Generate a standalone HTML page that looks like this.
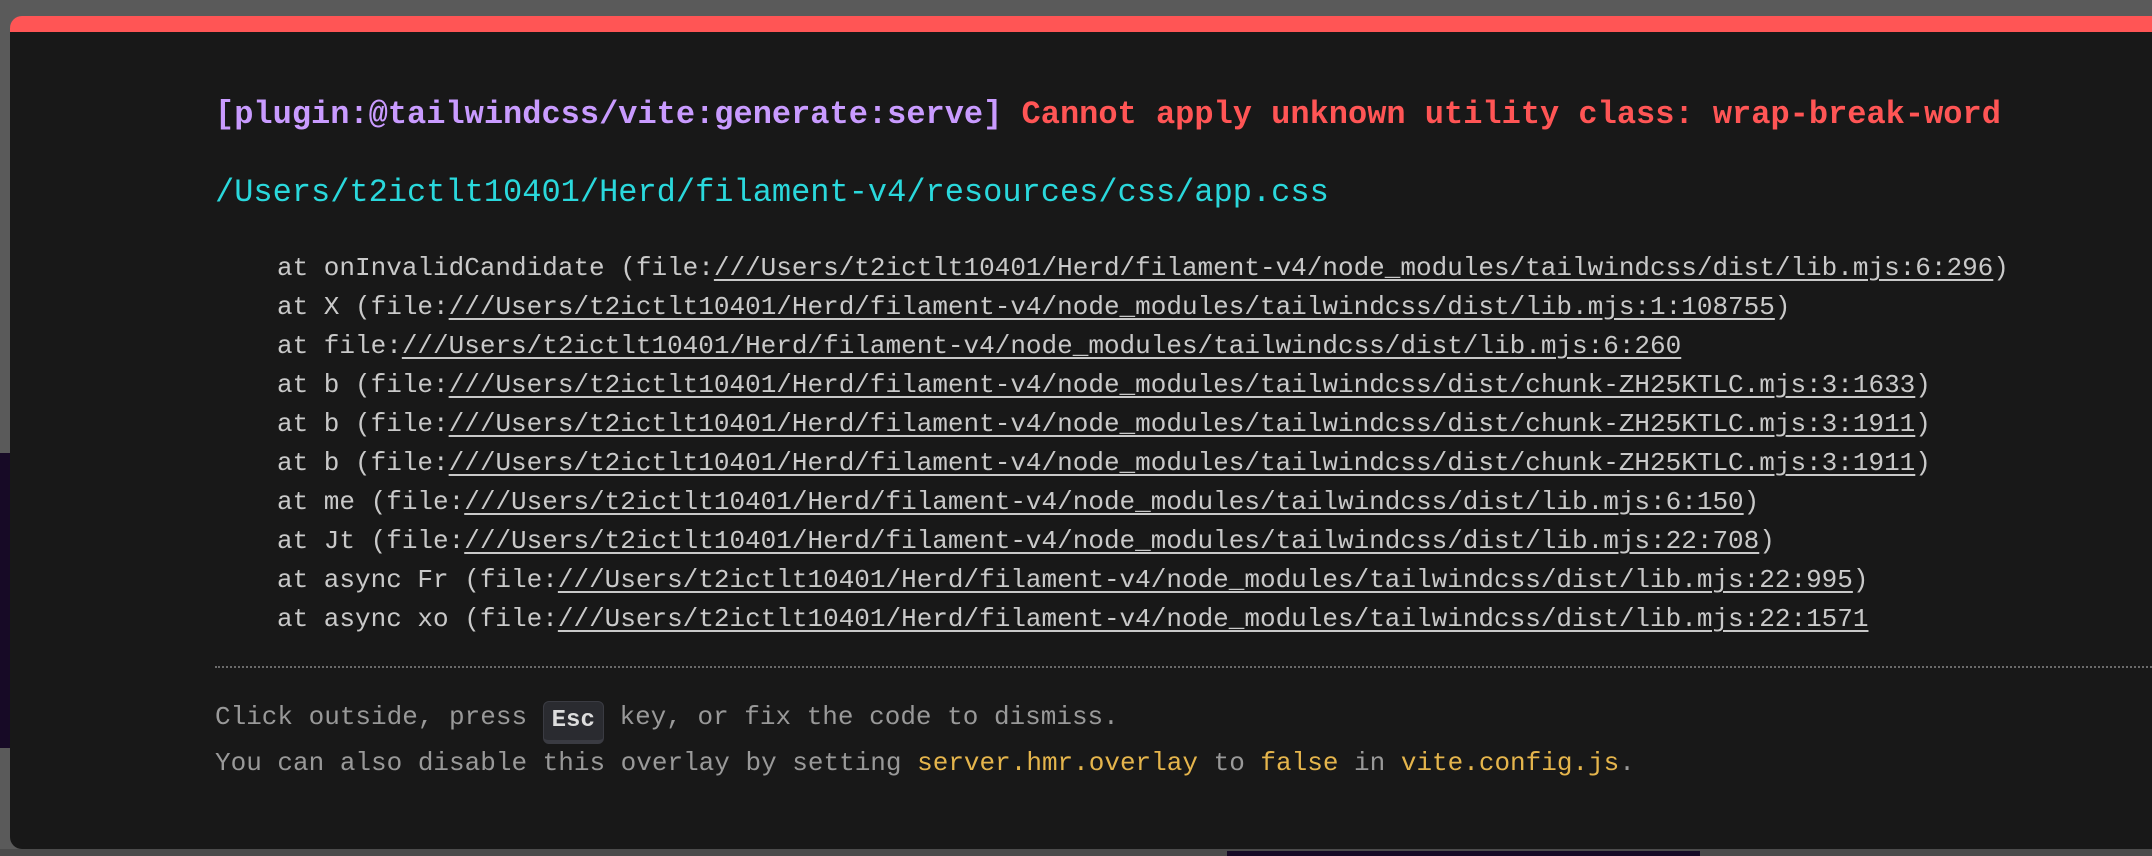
<!DOCTYPE html>
<html><head><meta charset="utf-8"><style>
html,body{margin:0;padding:0;width:2152px;height:856px;overflow:hidden;background:#5a5a5a;font-family:"Liberation Mono","DejaVu Sans Mono",monospace;}
.purple{position:absolute;left:0;top:453px;width:12px;height:295px;background:#170a26;}
.bot{position:absolute;left:0;top:849px;width:2152px;height:7px;background:#4b4b4b;}
.bot2{position:absolute;left:1227px;top:851px;width:473px;height:5px;background:#170a26;}
.panel{position:absolute;left:10px;top:16px;width:2200px;height:833px;background:#181818;border-top:16px solid #ff5555;box-sizing:border-box;border-radius:12px 0 0 12px;}
.l{position:absolute;white-space:pre;left:215px;}
.t{font-size:32px;font-weight:bold;top:95px;line-height:40px;}
.p{color:#c99bff}.r{color:#ff5555}
.path{font-size:32px;color:#2ad8dc;top:173px;line-height:40px;}
.s{font-size:26px;color:#c9c9c9;left:277px;line-height:34px;}
.s u{text-decoration:underline;text-underline-offset:4px;text-decoration-thickness:2px}
.hr{position:absolute;left:215px;right:0;top:666px;border-top:2px dotted #6a6a6a;}
.f{font-size:26px;color:#999;line-height:34px;}
.y{color:#e5b54c}
kbd{display:inline-block;font-family:inherit;font-weight:bold;color:#ddd;background:#2a2b30;border:1px solid #3a3b42;border-bottom:4px solid #3a3b42;border-radius:6px;padding:0 8px;line-height:38px;font-size:24px;vertical-align:-2px;}
</style></head><body>
<div class="purple"></div><div class="bot"></div><div class="bot2"></div>
<div class="panel"></div>
<div class="l t"><span class="p">[plugin:@tailwindcss/vite:generate:serve]</span> <span class="r">Cannot apply unknown utility class: wrap-break-word</span></div>
<div class="l path">/Users/t2ictlt10401/Herd/filament-v4/resources/css/app.css</div>
<div class="l s" style="top:251px">at onInvalidCandidate (file:<u>///Users/t2ictlt10401/Herd/filament-v4/node_modules/tailwindcss/dist/lib.mjs:6:296</u>)</div>
<div class="l s" style="top:290px">at X (file:<u>///Users/t2ictlt10401/Herd/filament-v4/node_modules/tailwindcss/dist/lib.mjs:1:108755</u>)</div>
<div class="l s" style="top:329px">at file:<u>///Users/t2ictlt10401/Herd/filament-v4/node_modules/tailwindcss/dist/lib.mjs:6:260</u></div>
<div class="l s" style="top:368px">at b (file:<u>///Users/t2ictlt10401/Herd/filament-v4/node_modules/tailwindcss/dist/chunk-ZH25KTLC.mjs:3:1633</u>)</div>
<div class="l s" style="top:407px">at b (file:<u>///Users/t2ictlt10401/Herd/filament-v4/node_modules/tailwindcss/dist/chunk-ZH25KTLC.mjs:3:1911</u>)</div>
<div class="l s" style="top:446px">at b (file:<u>///Users/t2ictlt10401/Herd/filament-v4/node_modules/tailwindcss/dist/chunk-ZH25KTLC.mjs:3:1911</u>)</div>
<div class="l s" style="top:485px">at me (file:<u>///Users/t2ictlt10401/Herd/filament-v4/node_modules/tailwindcss/dist/lib.mjs:6:150</u>)</div>
<div class="l s" style="top:524px">at Jt (file:<u>///Users/t2ictlt10401/Herd/filament-v4/node_modules/tailwindcss/dist/lib.mjs:22:708</u>)</div>
<div class="l s" style="top:563px">at async Fr (file:<u>///Users/t2ictlt10401/Herd/filament-v4/node_modules/tailwindcss/dist/lib.mjs:22:995</u>)</div>
<div class="l s" style="top:602px">at async xo (file:<u>///Users/t2ictlt10401/Herd/filament-v4/node_modules/tailwindcss/dist/lib.mjs:22:1571</u></div>
<div class="hr"></div>
<div class="l f" style="top:700px">Click outside, press <kbd>Esc</kbd> key, or fix the code to dismiss.</div>
<div class="l f" style="top:746px">You can also disable this overlay by setting <span class="y">server.hmr.overlay</span> to <span class="y">false</span> in <span class="y">vite.config.js</span>.</div>
</body></html>
